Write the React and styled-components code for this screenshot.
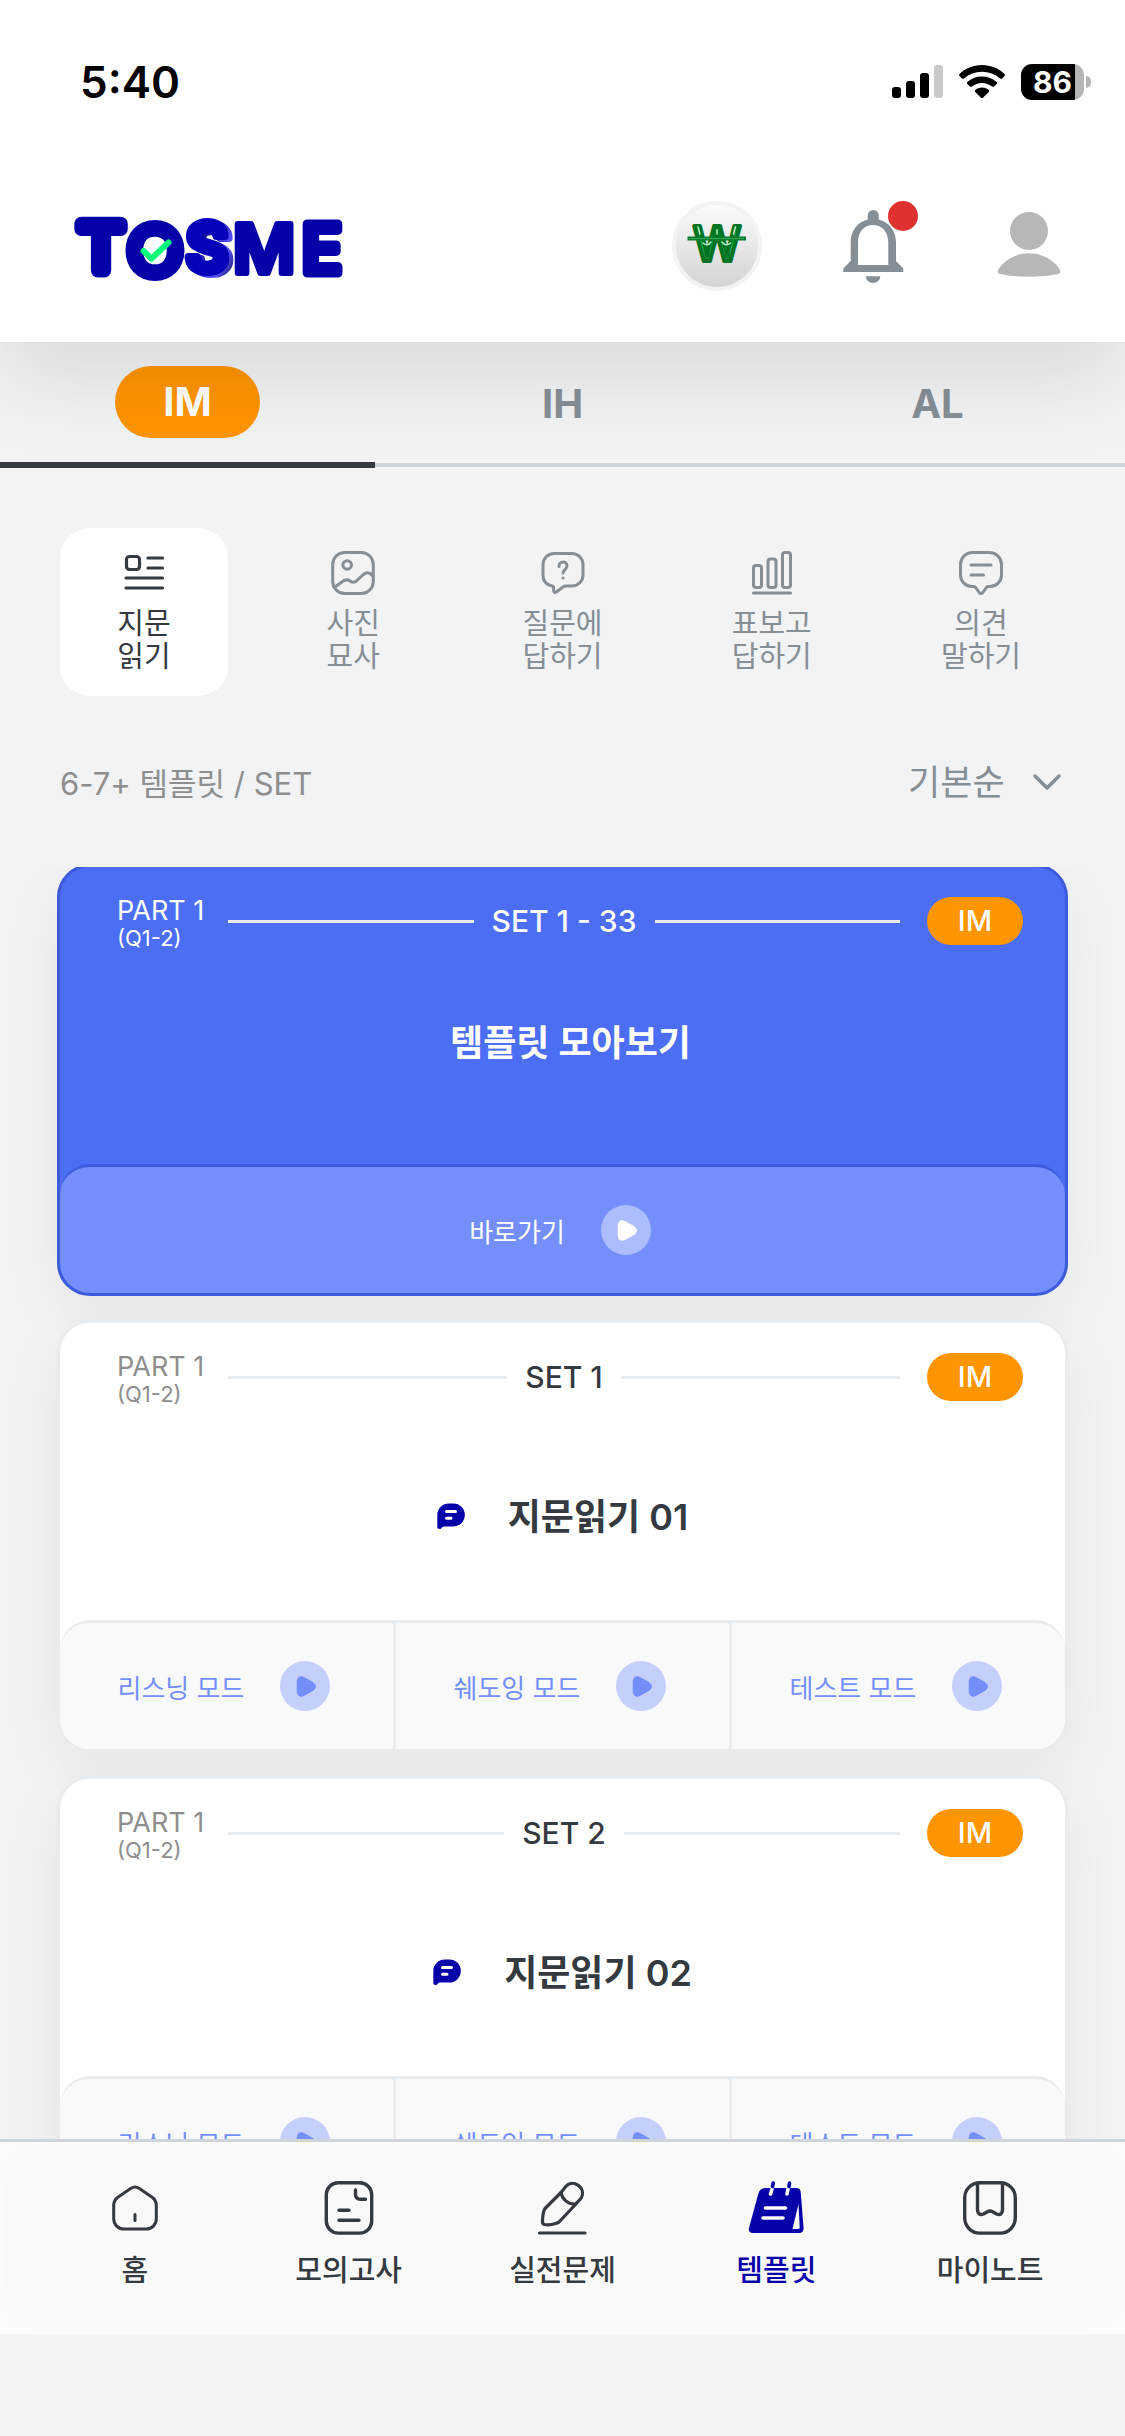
import React, { useState } from 'react'
import styled, { createGlobalStyle, css } from 'styled-components'

const GlobalStyle = createGlobalStyle`
  * {
    box-sizing: border-box;
  }

  body {
    margin: 0;
    background: #f1f3f5;
    color: #343a40;
    font-family: Inter, 'Noto Sans CJK KR', sans-serif;
  }

  button, select {
    margin: 0;
    padding: 0;
    border: none;
    background: none;
    color: inherit;
    font: inherit;
    cursor: pointer;
  }

  svg {
    display: block;
    flex: none;
    overflow: visible;
  }
`

const Screen = styled.div`
  display: flex;
  flex-direction: column;
  height: 100vh;
  overflow: hidden;
`

const Top = styled.div`
  position: relative;
  z-index: 2;
  background: #fff;
  box-shadow: 0 45px 75px rgba(0, 0, 0, 0.09);
`

const StatusBar = styled.div`
  display: flex;
  align-items: center;
  justify-content: space-between;
  padding: 60px 34px 46px 80px;
  color: #000;
  font-size: 44px;
  font-weight: 600;
  line-height: 44px;
`

const StatusIcons = styled.div`
  display: flex;
  align-items: center;
  gap: 16px;
`

const Battery = styled.div`
  display: flex;
  align-items: center;
  gap: 2px;
`

const BatteryLevel = styled.span`
  width: 63px;
  height: 36px;
  border-radius: 11px;
  background: linear-gradient(90deg, #000 86%, #b5b5b5 86%);
  color: #fff;
  font-size: 30px;
  font-weight: 700;
  line-height: 36px;
  text-align: center;
`

const BatteryTip = styled.span`
  width: 5px;
  height: 12px;
  border-radius: 0 6px 6px 0;
  background: #b5b5b5;
`

const Header = styled.header`
  display: flex;
  align-items: center;
  justify-content: space-between;
  padding: 51px 51px 51px 70px;
`

const HeaderActions = styled.div`
  display: flex;
  gap: 66px;
`

const HeaderButton = styled.button`
  position: relative;
  width: 90px;
  height: 90px;
`

const CoinButton = styled(HeaderButton)`
  border: 4px solid #f1f3f5;
  border-radius: 50%;
  background: linear-gradient(#fbfbfb, #d4d4d4);

  svg {
    margin: -4px;
  }
`

const UnreadDot = styled.span`
  position: absolute;
  top: 0;
  right: 0;
  width: 30px;
  height: 30px;
  border-radius: 50%;
  background: #e03131;
`

const Tabs = styled.nav`
  display: flex;
`

const Tab = styled.button`
  flex: 1;
  height: 126px;
  color: #868e96;
  font-size: 40px;
  font-weight: 700;
  line-height: 48px;
  border-bottom: 6px solid #343a40;

  ${props => !props.$active && css`
    height: 125px;
    padding-top: 2px;
    border-bottom: 4px solid #d0d5dc;
  `}
`

const TabPill = styled.span`
  display: inline-block;
  width: 145px;
  padding: 12px 0;
  border-radius: 36px;
  background: #ff9500;
  color: #fff;
`

const Categories = styled.div`
  display: flex;
  justify-content: space-between;
  padding: 60px 60px 0;
`

const Category = styled.button`
  display: flex;
  flex-direction: column;
  align-items: center;
  gap: 10px;
  width: 168px;
  height: 168px;
  padding-top: 21px;
  border-radius: 30px;
  background: ${props => props.$active ? '#fff' : 'transparent'};
  color: ${props => props.$active ? '#343a40' : '#868e96'};
  font-size: 29px;
  line-height: 33px;
  white-space: pre-line;
`

const Meta = styled.div`
  display: flex;
  flex: none;
  align-items: center;
  justify-content: space-between;
  height: 171px;
  padding: 0 60px;
`

const MetaTitle = styled.span`
  color: #8e8e8e;
  font-size: 31px;
`

const Sort = styled.label`
  display: flex;
  align-items: center;
  gap: 24px;
  color: #868e96;
  font-size: 35px;

  select {
    appearance: none;
    outline: none;
  }
`

const List = styled.main`
  display: flex;
  flex: 1;
  flex-direction: column;
  gap: 24px;
  min-height: 0;
  padding: 0 57px;
  overflow-y: auto;
  scrollbar-width: none;
`

const Card = styled.article`
  flex: none;
  border: 3px solid ${props => props.$primary ? '#3b5bdb' : '#e9ecef'};
  border-radius: 33px;
  background: ${props => props.$primary ? '#4c6ef5' : '#fff'};
  box-shadow: 0 20px 60px rgba(0, 0, 0, 0.06);
  color: ${props => props.$primary ? '#fff' : '#343a40'};
  overflow: hidden;

  /* the list opens scrolled by the width of the border */
  &:first-child {
    margin-top: -3px;
  }
`

const CardHead = styled.div`
  display: flex;
  gap: 18px;
  height: 84px;
  padding: 30px 42px 0 57px;
`

const Part = styled.div`
  width: 93px;
  color: ${props => props.$primary ? '#fff' : '#8e8e8e'};
  font-size: 27px;
  line-height: 28px;
  white-space: nowrap;

  small {
    display: block;
    font-size: 22px;
    line-height: 26px;
  }
`

const SetName = styled.div`
  display: flex;
  flex: 1;
  align-items: center;
  gap: 18px;
  height: 48px;
  font-size: 30px;
  font-weight: 500;

  &::before,
  &::after {
    content: '';
    flex: 1;
    height: 3px;
    background: #e9ecef;
  }
`

const Badge = styled.span`
  width: 96px;
  height: 48px;
  margin-left: 9px;
  border-radius: 24px;
  background: #ff9500;
  color: #fff;
  font-size: 29px;
  font-weight: 500;
  line-height: 48px;
  text-align: center;
`

const CardBody = styled.div`
  display: flex;
  align-items: center;
  justify-content: center;
  gap: 27px;
  height: 213px;
  padding: ${props => props.$primary ? '0 0 30px' : '6px 0 0'};
`

const Title = styled.h2`
  margin: 0 0 0 16px;
  font-size: 36px;
  font-weight: 600;
  line-height: 48px;
`

const CardFoot = styled.div`
  display: flex;
  border-top: 3px solid ${props => props.$primary ? '#3b5bdb' : '#e9ecef'};
  border-radius: 30px;
  background: ${props => props.$primary ? '#748ffc' : '#f8f9fa'};
  overflow: hidden;
`

const Mode = styled.button`
  display: flex;
  flex: 1;
  box-sizing: content-box;
  align-items: center;
  justify-content: center;
  gap: 36px;
  height: 126px;
  padding-right: 5px;
  color: ${props => props.$primary ? '#fff' : '#748ffc'};
  font-size: 26px;

  & + & {
    border-left: 3px solid #e9ecef;
  }
`

const BottomNav = styled.nav`
  display: flex;
  flex: none;
  height: 195px;
  margin-bottom: 102px;
  padding: 36px 28px 0;
  border-top: 3px solid #ced4da;
  background: #f9f9f9;
  box-shadow: inset 0 0 45px #fdfdfd;
`

const NavLink = styled.a`
  display: flex;
  flex: 1;
  flex-direction: column;
  align-items: center;
  gap: 16px;
  color: ${props => props.$active ? '#0600a8' : '#343a40'};
  font-size: 29px;
  font-weight: 500;
  line-height: 33px;
  text-decoration: none;
`

const stroke = {
  fill: 'none',
  stroke: 'currentColor',
  strokeLinecap: 'round',
  strokeLinejoin: 'round'
}

const Logo = () => (
  <svg width='276' height='66' viewBox='0 -3 276 66' role='img' aria-label='TOSME'>
    <defs>
      <linearGradient id='depth' x1='0' y1='0' x2='1' y2='1'>
        <stop offset='0.3' stopColor='#0a0a90' />
        <stop offset='0.7' stopColor='#5a55ff' />
        <stop offset='1' stopColor='#05053c' />
      </linearGradient>
    </defs>
    <g fill='#0600a8' stroke='#0600a8' strokeLinejoin='round' fontFamily='Inter, sans-serif' textAnchor='middle'>
      <text x='31' y='55' fontFamily='"DejaVu Sans", sans-serif' fontSize='64' strokeWidth='14'>T</text>
      <text x='85' y='59' fontFamily='Lato, sans-serif' fontSize='68' strokeWidth='11'>O</text>
      <g fontSize='66' fontWeight='600' strokeWidth='8'>
        <text x='141' y='57' fill='url(#depth)' stroke='url(#depth)'>S</text>
        <text x='137' y='55' fill='#0600b8' stroke='#0600b8'>S</text>
      </g>
      <text x='194' y='57' fontSize='68' fontWeight='600' strokeWidth='6'>M</text>
      <text x='252' y='57' fontSize='67' fontWeight='500' strokeWidth='9'>E</text>
    </g>
    <path d='M73.500 35 L81.500 42.500 L98.500 26.500' fill='none' stroke='#00ff7b' strokeWidth='6' strokeLinecap='round' strokeLinejoin='round' />
  </svg>
)

const WonIcon = () => (
  <svg width='90' height='90' viewBox='0 0 90 90'>
    <defs>
      <linearGradient id='won' x1='0' y1='0' x2='0' y2='1'>
        <stop offset='0.2' stopColor='#007a1c' />
        <stop offset='0.45' stopColor='#00b040' />
        <stop offset='0.65' stopColor='#3cc46c' />
        <stop offset='0.85' stopColor='#00701a' />
      </linearGradient>
    </defs>
    <text x='45' y='60' fill='url(#won)' stroke='#007322' strokeWidth='4' strokeLinejoin='round' fontFamily='Inter, sans-serif' fontSize='48' fontWeight='500' textAnchor='middle'>W</text>
    <path d='M31 42 Q35.500 46 39 41 M50 41 Q54 46 58.500 42 M26 26 L28 33 M63.500 26 L61.500 33 M45 29 V33' fill='none' stroke='#b5f0c8' strokeWidth='1.500' strokeLinecap='round' />
    <path d='M15.500 37.500 H74' stroke='#0a7a2c' strokeWidth='4' />
    <path d='M17 37.500 H72' stroke='#27a852' strokeWidth='1' />
  </svg>
)

const BellIcon = () => (
  <svg width='90' height='90' viewBox='0 0 90 90' fill='#868e96'>
    <path fillRule='evenodd' d='M39.7 18.500 V14.500 A5.500 5.500 0 0 1 50.700 14.500 V18.500 C61 21 68 30 68 41 V60 L75.300 67.500 V71 H15.300 V67.500 L22.700 60 V41 C22.700 30 29.500 21 39.700 18.500 Z M30 64 H60.300 V41 C60.300 31 54 24 45 24 C36 24 30 31 30 41 Z' />
    <path d='M37.700 75.300 H52.300 A7.300 6.700 0 0 1 37.700 75.300 Z' />
  </svg>
)

const PersonIcon = () => (
  <svg width='90' height='90' viewBox='0 0 90 90' fill='#b7b7b7'>
    <circle cx='45' cy='30' r='19' />
    <path d='M45 52.300 C58 52.300 70 59 76 69 C77 71 76 72.500 74 73 C65 75 55 75.700 45 75.700 C35 75.700 25 75 16 73 C14 72.500 13 71 14 69 C20 59 32 52.300 45 52.300 Z' />
  </svg>
)

const SignalIcon = () => (
  <svg width='51' height='34' viewBox='0 0 51 34'>
    <rect x='0' y='22' width='9' height='11' rx='3' />
    <rect x='14' y='16' width='9' height='17' rx='3' />
    <rect x='28' y='8' width='9' height='25' rx='3' />
    <rect x='42' y='0' width='9' height='33' rx='3' fill='#c9c9c9' />
  </svg>
)

const WifiIcon = () => (
  <svg width='46' height='34' viewBox='0 0 46 34'>
    <path d='M23 0 C32 0 40 3.500 45.500 9 Q46.500 10 45.500 11 L43 13.500 Q42 14.300 41 13.500 C36 9 30 6.800 23 6.800 C16 6.800 10 9 5 13.500 Q4 14.300 3 13.500 L0.500 11 Q-0.500 10 0.500 9 C6 3.500 14 0 23 0 Z' />
    <path d='M23 11.500 C29 11.500 33.800 13.500 37.700 17 Q38.600 18 37.700 19 L35 21.600 Q34 22.400 33 21.600 C30 19.200 27 18 23 18 C19 18 16 19.200 13 21.600 Q12 22.400 11 21.600 L8.300 19 Q7.400 18 8.300 17 C12.200 13.500 17 11.500 23 11.500 Z' />
    <path d='M23 22.500 C26 22.500 28 23.500 29.800 25 Q30.600 26 29.800 27 L24 32.800 Q23 33.600 22 32.800 L16.200 27 Q15.400 26 16.200 25 C18 23.500 20 22.500 23 22.500 Z' />
  </svg>
)

const ReadIcon = () => (
  <svg width='48' height='48' viewBox='0 0 48 48' strokeWidth='3.200' {...stroke}>
    <rect x='6.500' y='7.500' width='13' height='13' rx='3' />
    <path d='M28 9 H42.500 M28 19 H42.500 M6 29 H42.500 M6 39 H42.500' />
  </svg>
)

const PictureIcon = () => (
  <svg width='48' height='48' viewBox='0 0 48 48' strokeWidth='3' {...stroke}>
    <rect x='3.700' y='3.500' width='40.600' height='41' rx='12' />
    <circle cx='18.200' cy='16' r='4.300' />
    <path d='M6.300 37.700 L13.500 32.500 Q17.500 29.500 21 32 Q25 35 28.500 31 L34 25.800 Q37.500 22.500 41 24.500 L44 27' />
  </svg>
)

const QuestionIcon = () => (
  <svg width='48' height='48' viewBox='0 0 48 48' strokeWidth='3' {...stroke}>
    <path d='M15 4.500 H33 A11 11 0 0 1 44 15.500 V26 A11 11 0 0 1 33 37 H27 Q25.500 37 24 38 L17 43.200 Q14.800 44 14.600 41.500 V39 Q14.600 37.200 12.500 36.800 C7 35.500 4 32 4 26 V15.500 A11 11 0 0 1 15 4.500 Z' />
    <path d='M20 17.500 C20 11.500 28 11.500 28 17 C28 20.500 24.200 20.500 24 24' />
    <circle cx='24' cy='29' r='1.600' fill='currentColor' stroke='none' />
  </svg>
)

const ChartIcon = () => (
  <svg width='48' height='48' viewBox='0 0 48 48' strokeWidth='3' {...stroke}>
    <rect x='5.500' y='16.500' width='8' height='22' rx='2.500' />
    <rect x='20' y='10' width='8' height='28.500' rx='2.500' />
    <rect x='34.500' y='3.500' width='8' height='35' rx='2.500' />
    <path d='M5.500 44 H42.500' />
  </svg>
)

const OpinionIcon = () => (
  <svg width='48' height='48' viewBox='0 0 48 48' strokeWidth='3' {...stroke}>
    <path d='M15.500 3.500 H32.500 A12 12 0 0 1 44.500 15.500 V26 A11.500 11.500 0 0 1 33 37.500 H31.500 Q29.800 37.500 29 39 L25.800 43.500 Q24 45.500 22.200 43.500 L19 39 Q18.200 37.500 16.500 37.500 H15 A11.500 11.500 0 0 1 3.500 26 V15.500 A12 12 0 0 1 15.500 3.500 Z' />
    <path d='M14 16 H34 M14 26 H26.500' />
  </svg>
)

const ChevronIcon = () => (
  <svg width='36' height='24' viewBox='0 0 36 24' strokeWidth='3.500' {...stroke}>
    <path d='M6 6 L18 18 L30 6' />
  </svg>
)

const ChatIcon = () => (
  <svg width='28' height='28' viewBox='0 0 28 28'>
    <path fill='#0600a8' d='M12 0.500 H16.500 A11.300 11.500 0 0 1 16.500 23.500 H7 Q6 23.500 5 24.500 L3.500 26 Q0.300 26.500 0.300 24 V12 A11.500 11.500 0 0 1 12 0.500 Z' />
    <path d='M9.500 8.500 H18.500 M9.500 15.200 H14' stroke='#fff' strokeWidth='3' strokeLinecap='round' />
  </svg>
)

const PlayIcon = ({ primary }) => (
  <svg width='50' height='50' viewBox='0 0 50 50'>
    <circle cx='25' cy='25' r='25' fill={primary ? '#acbcfd' : '#c4cffc'} />
    <path fill={primary ? '#fff' : '#748ffc'} d='M16.700 21.500 C16.700 16 20 14 24.500 16.300 L32 20.500 C37.300 23.700 37.300 27.300 32 30.500 L24.500 34.700 C20 37 16.700 35 16.700 29.500 Z' />
  </svg>
)

const HomeIcon = () => (
  <svg width='60' height='60' viewBox='0 0 60 60' strokeWidth='3' {...stroke}>
    <path d='M26 10.300 Q30 7.600 34 10.300 L47.500 19.500 Q51.300 22.500 51.300 27.500 V41 A10 10 0 0 1 41.300 51 H18.700 A10 10 0 0 1 8.700 41 V27.500 Q8.700 22.500 12.500 19.500 Z' />
    <path d='M30 36.500 V42.500' />
  </svg>
)

const ExamIcon = () => (
  <svg width='60' height='60' viewBox='0 0 60 60' strokeWidth='3.400' {...stroke}>
    <rect x='7.300' y='4.700' width='45.400' height='50.400' rx='12' />
    <path d='M36.500 12 V16.500 Q36.500 21.300 41.500 21.300 H46.500 M20 32.300 H30 M20 42.300 H40' />
  </svg>
)

const PencilIcon = () => (
  <svg width='60' height='60' viewBox='0 0 60 60' strokeWidth='3.200' {...stroke}>
    <path d='M29 14.500 L34 8.300 C41 0.500 54.500 10 49.500 19.500 C48 22 44.500 25 43 27 L28.500 42.500 Q27 44.500 24.500 45.200 C20 46.700 15 47 12.500 46.500 Q10.300 46 10.500 43 C10.700 38 11 35 12 32.500 Q12.500 31 14 29.500 Z' />
    <path d='M29 14.500 C30 21 36 26.500 43 26' />
    <path d='M7.500 55 H53' />
  </svg>
)

const TemplateIcon = () => (
  <svg width='60' height='60' viewBox='0 0 60 60'>
    <path fill='currentColor' d='M20 10 H50 Q54.500 10 54.700 14 L57.600 50 Q57.600 55 53 55 H7 Q2 55 3 50 L12.500 15 Q14 10 20 10 Z' />
    <path fill='#f9f9f9' d='M52.500 26 L53.700 49.500 Q53.700 51 52 51 H46.500 Z' />
    <g fill='none' strokeWidth='3.600' strokeLinecap='round'>
      <path stroke='#f9f9f9' d='M19.500 30 H39.500 M17 40 H37 M26 11 L24.500 16 M42 11 L41 16' />
      <path stroke='currentColor' d='M27.300 5 L26.500 8.500 M43.500 5 L43 8.500' />
    </g>
  </svg>
)

const NoteIcon = () => (
  <svg width='60' height='60' viewBox='0 0 60 60' strokeWidth='3.400' {...stroke}>
    <rect x='4.700' y='4.700' width='50.600' height='50.400' rx='15' />
    <path d='M17.500 5.500 V32 Q18 38 23.500 36 L27 34 Q30 31.800 33 34 L36.500 36 Q42 38 42.500 32 V5.500' />
  </svg>
)

const levels = ['IM', 'IH', 'AL']

const categories = [
  { label: '지문\n읽기', Icon: ReadIcon },
  { label: '사진\n묘사', Icon: PictureIcon },
  { label: '질문에\n답하기', Icon: QuestionIcon },
  { label: '표보고\n답하기', Icon: ChartIcon },
  { label: '의견\n말하기', Icon: OpinionIcon }
]

const sets = [
  { name: 'SET 1 - 33', title: '템플릿 모아보기', modes: ['바로가기'], primary: true },
  { name: 'SET 1', title: '지문읽기 01', modes: ['리스닝 모드', '쉐도잉 모드', '테스트 모드'] },
  { name: 'SET 2', title: '지문읽기 02', modes: ['리스닝 모드', '쉐도잉 모드', '테스트 모드'] }
]

const links = [
  { label: '홈', Icon: HomeIcon },
  { label: '모의고사', Icon: ExamIcon },
  { label: '실전문제', Icon: PencilIcon },
  { label: '템플릿', Icon: TemplateIcon, active: true },
  { label: '마이노트', Icon: NoteIcon }
]

const SetCard = ({ name, title, modes, primary }) => (
  <Card $primary={primary}>
    <CardHead>
      <Part $primary={primary}>PART 1<small>(Q1-2)</small></Part>
      <SetName>{name}</SetName>
      <Badge>IM</Badge>
    </CardHead>
    <CardBody $primary={primary}>
      {!primary && <ChatIcon />}
      <Title>{title}</Title>
    </CardBody>
    <CardFoot $primary={primary}>
      {modes.map(mode => (
        <Mode key={mode} $primary={primary}>
          {mode}
          <PlayIcon primary={primary} />
        </Mode>
      ))}
    </CardFoot>
  </Card>
)

const App = () => {
  const [level, setLevel] = useState('IM')
  const [category, setCategory] = useState(0)

  return (
    <Screen>
      <GlobalStyle />
      <Top>
        <StatusBar>
          <span>5:40</span>
          <StatusIcons>
            <SignalIcon />
            <WifiIcon />
            <Battery>
              <BatteryLevel>86</BatteryLevel>
              <BatteryTip />
            </Battery>
          </StatusIcons>
        </StatusBar>
        <Header>
          <Logo />
          <HeaderActions>
            <CoinButton aria-label='포인트'><WonIcon /></CoinButton>
            <HeaderButton aria-label='알림'><BellIcon /><UnreadDot /></HeaderButton>
            <HeaderButton aria-label='내 정보'><PersonIcon /></HeaderButton>
          </HeaderActions>
        </Header>
      </Top>
      <Tabs>
        {levels.map(name => (
          <Tab key={name} $active={name === level} onClick={() => setLevel(name)}>
            {name === level ? <TabPill>{name}</TabPill> : name}
          </Tab>
        ))}
      </Tabs>
      <Categories>
        {categories.map(({ label, Icon }, i) => (
          <Category key={label} $active={i === category} onClick={() => setCategory(i)}>
            <Icon />
            {label}
          </Category>
        ))}
      </Categories>
      <Meta>
        <MetaTitle>6-7+ 템플릿 / SET</MetaTitle>
        <Sort>
          <select aria-label='정렬'>
            <option>기본순</option>
          </select>
          <ChevronIcon />
        </Sort>
      </Meta>
      <List>
        {sets.map(set => <SetCard key={set.name} {...set} />)}
      </List>
      <BottomNav>
        {links.map(({ label, Icon, active }) => (
          <NavLink key={label} href='#' $active={active}>
            <Icon />
            {label}
          </NavLink>
        ))}
      </BottomNav>
    </Screen>
  )
}

export default App
